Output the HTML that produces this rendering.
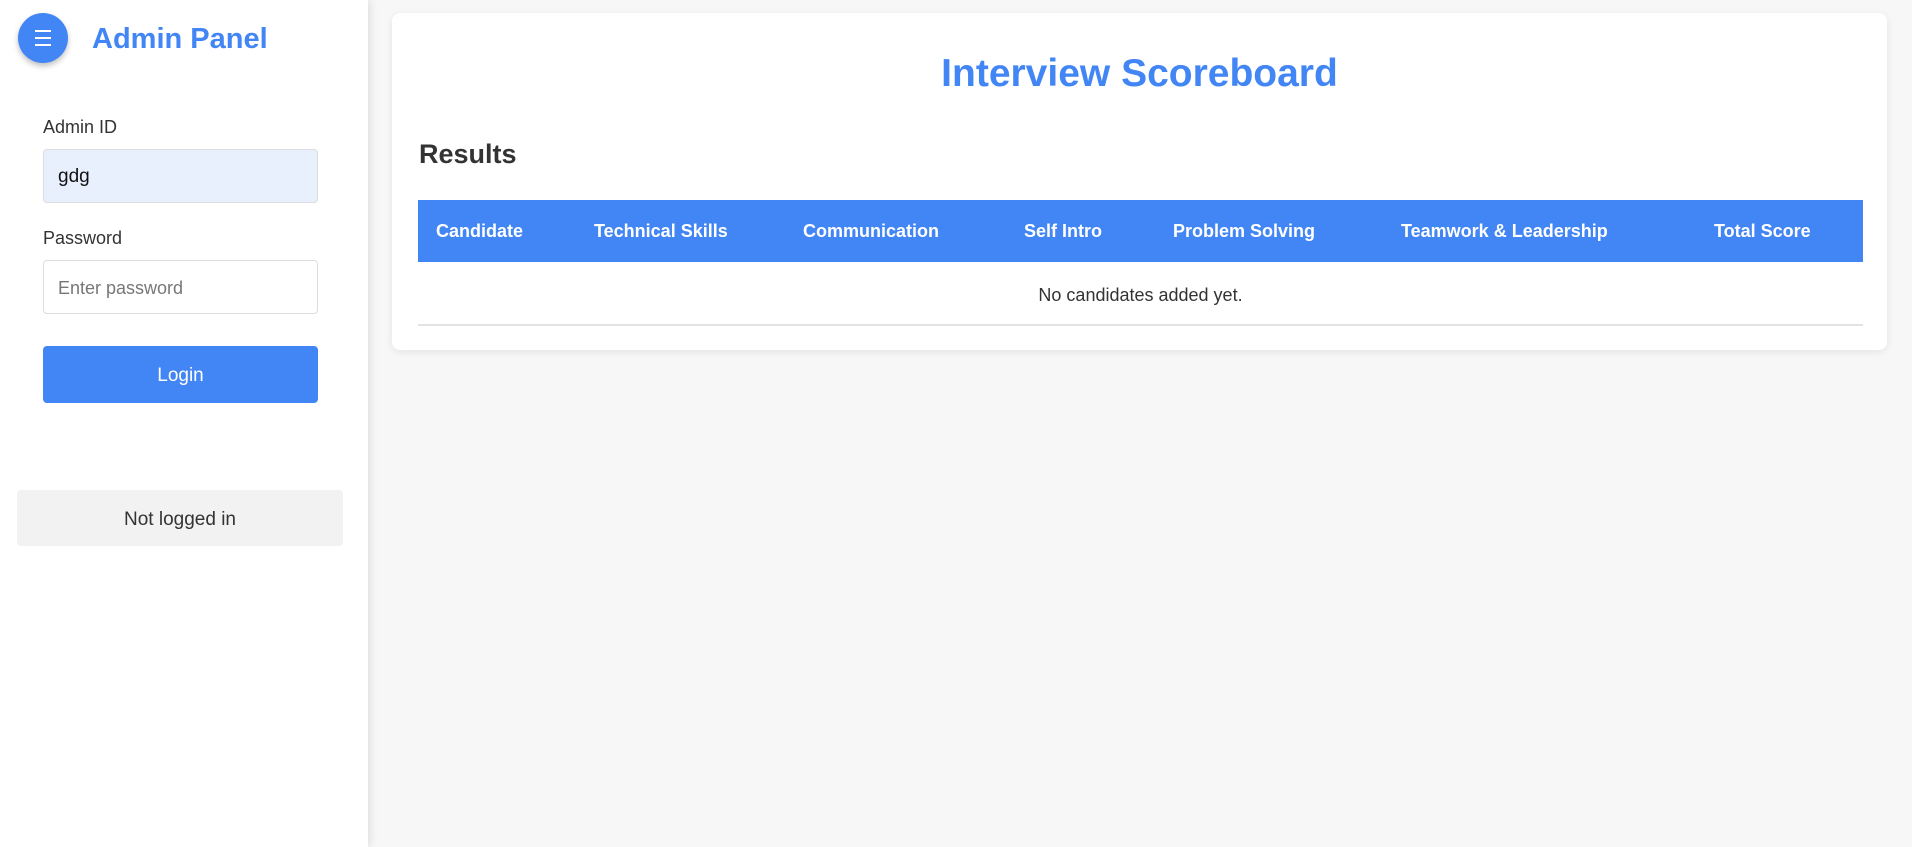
<!DOCTYPE html>
<html><head><meta charset="utf-8"><style>
*{box-sizing:border-box;margin:0;padding:0}
body{width:1912px;height:847px;background:#f7f7f7;font-family:"Liberation Sans",sans-serif;color:#333;position:relative;overflow:hidden}
.side{position:absolute;left:0;top:0;width:368px;height:847px;background:#fff;box-shadow:2px 0 8px rgba(0,0,0,.1)}
.menu{position:absolute;left:18px;top:13px;width:50px;height:50px;border-radius:50%;background:#4285f4;box-shadow:0 3px 6px rgba(0,0,0,.25)}
.menu i{position:absolute;left:17px;width:16px;height:2px;background:#fff}
.brand{position:absolute;left:92px;top:23px;font-size:29px;font-weight:bold;color:#4285f4}
.lbl{position:absolute;left:43px;font-size:18px;color:#333}
.inp{position:absolute;left:43px;width:275px;height:54px;border:1px solid #ddd;border-radius:4px;font-size:19px;padding:0 14px;line-height:54px}
.btn{position:absolute;left:43px;top:346px;width:275px;height:57px;background:#4285f4;border-radius:4px;color:#fff;font-size:19px;text-align:center;line-height:59px}
.st{position:absolute;left:17px;top:490px;width:326px;height:56px;background:#f2f2f2;border-radius:4px;text-align:center;line-height:60px;font-size:19px}
.card{position:absolute;left:392px;top:13px;width:1495px;height:337px;background:#fff;border-radius:8px;box-shadow:0 2px 8px rgba(0,0,0,.08)}
h1{position:absolute;left:0;right:0;top:39px;text-align:center;font-size:39px;color:#4285f4}
h2{position:absolute;left:27px;top:126px;font-size:27px;color:#333}
table{position:absolute;left:26px;top:187px;width:1445px;border-collapse:collapse;table-layout:fixed}
th{background:#4285f4;color:#fff;font-size:18px;text-align:left;height:62px;padding:0 0 0 20px;white-space:nowrap}
td{height:63px;text-align:center;font-size:18px;border-bottom:2px solid #e3e3e3;padding-top:4px}
</style></head><body>
<div class="side">
<div class="menu"><i style="top:17px"></i><i style="top:24px"></i><i style="top:31px"></i></div>
<div class="brand">Admin Panel</div>
<div class="lbl" style="top:117px">Admin ID</div>
<div class="inp" style="top:149px;background:#e8f0fe;color:#111">gdg</div>
<div class="lbl" style="top:228px">Password</div>
<div class="inp" style="top:260px;color:#777;font-size:18px">Enter password</div>
<div class="btn">Login</div>
<div class="st">Not logged in</div>
</div>
<div class="card">
<h1>Interview Scoreboard</h1>
<h2>Results</h2>
<table><colgroup><col style="width:156px"><col style="width:209px"><col style="width:221px"><col style="width:149px"><col style="width:228px"><col style="width:313px"><col style="width:169px"></colgroup>
<tr><th style="padding-left:18px">Candidate</th><th>Technical Skills</th><th>Communication</th><th>Self Intro</th><th>Problem Solving</th><th>Teamwork &amp; Leadership</th><th>Total Score</th></tr>
<tr><td colspan="7">No candidates added yet.</td></tr></table>
</div>
</body></html>
